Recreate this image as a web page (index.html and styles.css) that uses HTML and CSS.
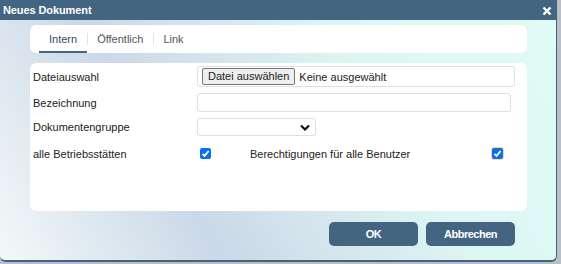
FILE: index.html
```html
<!DOCTYPE html>
<html lang="de">
<head>
    <meta charset="UTF-8">
    <title>Neues Dokument</title>
    <link rel="stylesheet" href="styles.css">
</head>
<body>

    <div class="dialog">
        <div class="titlebar">
            <span class="title">Neues Dokument</span>
            <svg class="close" width="10" height="10" viewBox="0 0 10 10"><path d="M1.5 1.5 L8.5 8.5 M8.5 1.5 L1.5 8.5" stroke="#fff" stroke-width="2.4"/></svg>
        </div>

        <div class="dialog-body">
            <div class="card tabs">
                <span class="tab active">Intern</span>
                <span class="tab">Öffentlich</span>
                <span class="tab">Link</span>
            </div>

            <form class="card form">
                <div class="row">
                    <label>Dateiauswahl</label>
                    <div class="field file-field">
                        <span class="file-btn">Datei auswählen</span>
                        <span>Keine ausgewählt</span>
                    </div>
                </div>
                <div class="row">
                    <label>Bezeichnung</label>
                    <div class="field text-field"></div>
                </div>
                <div class="row row-select">
                    <label>Dokumentengruppe</label>
                    <div class="field select-field">
                        <svg width="10" height="7" viewBox="0 0 10 7"><path d="M1 1.5 L5 5.5 L9 1.5" fill="none" stroke="#111" stroke-width="2.2"/></svg>
                    </div>
                </div>
                <div class="row">
                    <label>alle Betriebsstätten</label>
                    <div class="check-row">
                        <span class="check"><svg width="11" height="11" viewBox="0 0 11 11"><path d="M2.5 5.8 L4.6 7.9 L8.6 3" fill="none" stroke="#fff" stroke-width="1.8"/></svg></span>
                        <span class="check-label">Berechtigungen für alle Benutzer</span>
                        <span class="check focus"><svg width="11" height="11" viewBox="0 0 11 11"><path d="M2.5 5.8 L4.6 7.9 L8.6 3" fill="none" stroke="#fff" stroke-width="1.8"/></svg></span>
                    </div>
                </div>
            </form>

            <div class="actions">
                <button type="button">OK</button>
                <button type="button">Abbrechen</button>
            </div>
        </div>
    </div>

</body>
</html>
```

FILE: styles.css
```css
body {
    margin: 0;
    padding: 0;
    background-color: #b8bfc6;
    font-family: "Liberation Sans", Arial, sans-serif;
    font-size: 11px;
    color: #222;
}

.dialog {
    width: 557px;
    height: 262px;
    display: flex;
    flex-direction: column;
    border-radius: 0 0 6px 6px;
    overflow: hidden;
    box-sizing: border-box;
    border-right: 1px solid #44627e;
    border-bottom: 2px solid #44627e;
}

.titlebar {
    height: 20px;
    background-color: #436581;
    color: white;
    display: flex;
    align-items: center;
    justify-content: space-between;
    padding: 0 4px 0 3px;
    flex-shrink: 0;
}

.title {
    font-weight: bold;
    font-size: 11px;
    letter-spacing: -0.1px;
}

.close {
    margin-top: 1px;
}

.dialog-body {
    flex: 1;
    background: linear-gradient(60deg, #f3f9f8 0%, #cbd8e8 32%, #d4e3ec 46%, #dcf6f3 68%, #e0faf6 100%);
    padding: 5px 29px 0 30px;
    display: flex;
    flex-direction: column;
}

.card {
    background-color: white;
    border-radius: 6px;
}

.tabs {
    height: 28px;
    display: flex;
    align-items: stretch;
    padding-left: 9px;
    font-size: 11px;
}

.tab {
    display: flex;
    align-items: center;
    padding: 0 10px;
    color: #555;
    position: relative;
}

.tab + .tab::before {
    content: "";
    position: absolute;
    left: 0;
    top: 8px;
    height: 12px;
    border-left: 1px solid #e3e3e3;
}

.tab.active {
    color: #2f4e6b;
    border-bottom: 2px solid #436581;
    padding-top: 2px;
}

.form {
    margin-top: 10px;
    height: 148px;
    padding: 3px 0 0 3px;
    box-sizing: border-box;
}

.row {
    display: grid;
    grid-template-columns: 164px auto;
    align-items: center;
    min-height: 21px;
    margin-bottom: 5px;
}

.row-select {
    min-height: 18px;
    margin-bottom: 7px;
}

.row label {
    color: #222;
}

.field {
    border: 1px solid #dcdfe3;
    border-radius: 3px;
    box-sizing: border-box;
    display: flex;
    align-items: center;
}

.file-field {
    width: 318px;
    height: 21px;
    padding-left: 4px;
    gap: 4px;
    color: #222;
}

.file-btn {
    border: 1px solid #767676;
    background-color: #efefef;
    padding: 1px 5px;
    border-radius: 2px;
    line-height: 13px;
}

.text-field {
    width: 314px;
    height: 19px;
}

.select-field {
    width: 119px;
    height: 18px;
    justify-content: flex-end;
    padding-right: 5px;
}

.check-row {
    display: flex;
    align-items: center;
    height: 18px;
    padding-left: 3px;
}

.check {
    width: 11px;
    height: 11px;
    background-color: #0b6fe8;
    border-radius: 2px;
    display: flex;
}

.check.focus {
    box-shadow: 0 0 0 1px #f6d9a8;
}

.check-label {
    margin-left: 39px;
    width: 242px;
}

.actions {
    display: flex;
    justify-content: flex-end;
    gap: 8px;
    margin-top: 11px;
    padding-right: 12px;
}

.actions button {
    width: 89px;
    height: 24px;
    background-color: #436581;
    color: white;
    border: none;
    border-radius: 5px;
    font-family: "Liberation Sans", Arial, sans-serif;
    font-weight: bold;
    font-size: 11px;
    letter-spacing: -0.5px;
}
```
